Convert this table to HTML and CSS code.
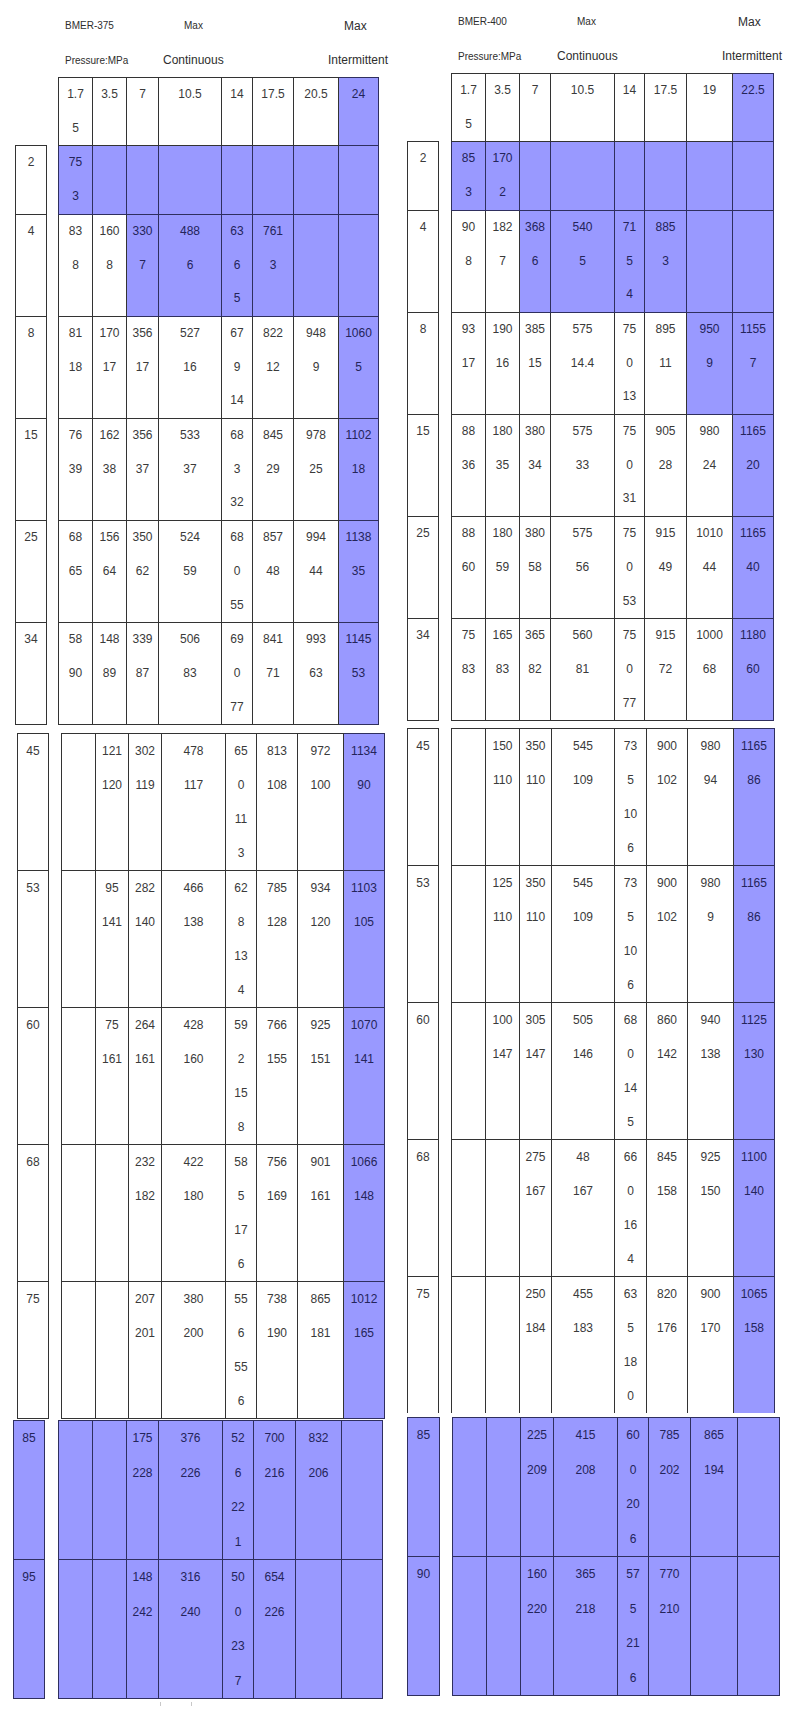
FILE: index.html
```html
<!DOCTYPE html>
<html lang="en">
<head>
<meta charset="utf-8">
<title>BMER-375 / BMER-400 Pressure Table</title>
<link rel="stylesheet" href="styles.css">
</head>
<body>
<div class="page">
  <div class="panel left">
    <div class="head">
      <div class="hline">
        <span class="t10 hw-a">BMER-375</span>
        <span class="t10 hw-b">Max</span>
        <span class="t12">Max</span>
      </div>
      <div class="hline hline2">
        <span class="t10 hw-c">Pressure:MPa</span>
        <span class="t12 hw-d">Continuous</span>
        <span class="t12">Intermittent</span>
      </div>
    </div>

    <table class="seg s1 L1">
      <colgroup><col class="w31"><col class="w12"><col class="w34"><col class="w34"><col class="w32"><col class="w63"><col class="w31"><col class="w41"><col class="w45"><col class="w40"></colgroup>
      <tr><td class="blank"></td><td class="sp"></td><td>1.7<br>5</td><td>3.5</td><td>7</td><td>10.5</td><td>14</td><td>17.5</td><td>20.5</td><td class="b">24</td></tr>
      <tr><td>2</td><td class="sp"></td><td class="b">75<br>3</td><td class="b"></td><td class="b"></td><td class="b"></td><td class="b"></td><td class="b"></td><td class="b"></td><td class="b"></td></tr>
      <tr><td>4</td><td class="sp"></td><td>83<br>8</td><td>160<br>8</td><td class="b">330<br>7</td><td class="b">488<br>6</td><td class="b">63<br>6<br>5</td><td class="b">761<br>3</td><td class="b"></td><td class="b"></td></tr>
      <tr><td>8</td><td class="sp"></td><td>81<br>18</td><td>170<br>17</td><td>356<br>17</td><td>527<br>16</td><td>67<br>9<br>14</td><td>822<br>12</td><td>948<br>9</td><td class="b">1060<br>5</td></tr>
      <tr><td>15</td><td class="sp"></td><td>76<br>39</td><td>162<br>38</td><td>356<br>37</td><td>533<br>37</td><td>68<br>3<br>32</td><td>845<br>29</td><td>978<br>25</td><td class="b">1102<br>18</td></tr>
      <tr><td>25</td><td class="sp"></td><td>68<br>65</td><td>156<br>64</td><td>350<br>62</td><td>524<br>59</td><td>68<br>0<br>55</td><td>857<br>48</td><td>994<br>44</td><td class="b">1138<br>35</td></tr>
      <tr><td>34</td><td class="sp"></td><td>58<br>90</td><td>148<br>89</td><td>339<br>87</td><td>506<br>83</td><td>69<br>0<br>77</td><td>841<br>71</td><td>993<br>63</td><td class="b">1145<br>53</td></tr>
    </table>

    <table class="seg s2 L2">
      <colgroup><col class="w31"><col class="w13"><col class="w34"><col class="w33"><col class="w33"><col class="w64"><col class="w31"><col class="w41"><col class="w46"><col class="w41"></colgroup>
      <tr><td>45</td><td class="sp"></td><td></td><td>121<br>120</td><td>302<br>119</td><td>478<br>117</td><td>65<br>0<br>11<br>3</td><td>813<br>108</td><td>972<br>100</td><td class="b">1134<br>90</td></tr>
      <tr><td>53</td><td class="sp"></td><td></td><td>95<br>141</td><td>282<br>140</td><td>466<br>138</td><td>62<br>8<br>13<br>4</td><td>785<br>128</td><td>934<br>120</td><td class="b">1103<br>105</td></tr>
      <tr><td>60</td><td class="sp"></td><td></td><td>75<br>161</td><td>264<br>161</td><td>428<br>160</td><td>59<br>2<br>15<br>8</td><td>766<br>155</td><td>925<br>151</td><td class="b">1070<br>141</td></tr>
      <tr><td>68</td><td class="sp"></td><td></td><td></td><td>232<br>182</td><td>422<br>180</td><td>58<br>5<br>17<br>6</td><td>756<br>169</td><td>901<br>161</td><td class="b">1066<br>148</td></tr>
      <tr><td>75</td><td class="sp"></td><td></td><td></td><td>207<br>201</td><td>380<br>200</td><td>55<br>6<br>55<br>6</td><td>738<br>190</td><td>865<br>181</td><td class="b">1012<br>165</td></tr>
    </table>

    <table class="seg s3 L3">
      <colgroup><col class="w31"><col class="w14"><col class="w34"><col class="w34"><col class="w32"><col class="w64"><col class="w31"><col class="w42"><col class="w46"><col class="w41"></colgroup>
      <tr><td class="b">85</td><td class="sp"></td><td class="b"></td><td class="b"></td><td class="b">175<br>228</td><td class="b">376<br>226</td><td class="b">52<br>6<br>22<br>1</td><td class="b">700<br>216</td><td class="b">832<br>206</td><td class="b"></td></tr>
      <tr><td class="b">95</td><td class="sp"></td><td class="b"></td><td class="b"></td><td class="b">148<br>242</td><td class="b">316<br>240</td><td class="b">50<br>0<br>23<br>7</td><td class="b">654<br>226</td><td class="b"></td><td class="b"></td></tr>
    </table>
    <div class="mark"></div>
  </div>

  <div class="panel right">
    <div class="head">
      <div class="hline">
        <span class="t10 hw-a">BMER-400</span>
        <span class="t10 hw-b2">Max</span>
        <span class="t12">Max</span>
      </div>
      <div class="hline hline2">
        <span class="t10 hw-c2">Pressure:MPa</span>
        <span class="t12 hw-d">Continuous</span>
        <span class="t12">Intermittent</span>
      </div>
    </div>

    <table class="seg s1 R1">
      <colgroup><col class="w31"><col class="w13"><col class="w34"><col class="w34"><col class="w31"><col class="w64"><col class="w30"><col class="w42"><col class="w46"><col class="w41"></colgroup>
      <tr><td class="blank"></td><td class="sp"></td><td>1.7<br>5</td><td>3.5</td><td>7</td><td>10.5</td><td>14</td><td>17.5</td><td>19</td><td class="b">22.5</td></tr>
      <tr><td>2</td><td class="sp"></td><td class="b">85<br>3</td><td class="b">170<br>2</td><td class="b"></td><td class="b"></td><td class="b"></td><td class="b"></td><td class="b"></td><td class="b"></td></tr>
      <tr><td>4</td><td class="sp"></td><td>90<br>8</td><td>182<br>7</td><td class="b">368<br>6</td><td class="b">540<br>5</td><td class="b">71<br>5<br>4</td><td class="b">885<br>3</td><td class="b"></td><td class="b"></td></tr>
      <tr><td>8</td><td class="sp"></td><td>93<br>17</td><td>190<br>16</td><td>385<br>15</td><td>575<br>14.4</td><td>75<br>0<br>13</td><td>895<br>11</td><td class="b">950<br>9</td><td class="b">1155<br>7</td></tr>
      <tr><td>15</td><td class="sp"></td><td>88<br>36</td><td>180<br>35</td><td>380<br>34</td><td>575<br>33</td><td>75<br>0<br>31</td><td>905<br>28</td><td>980<br>24</td><td class="b">1165<br>20</td></tr>
      <tr><td>25</td><td class="sp"></td><td>88<br>60</td><td>180<br>59</td><td>380<br>58</td><td>575<br>56</td><td>75<br>0<br>53</td><td>915<br>49</td><td>1010<br>44</td><td class="b">1165<br>40</td></tr>
      <tr><td>34</td><td class="sp"></td><td>75<br>83</td><td>165<br>83</td><td>365<br>82</td><td>560<br>81</td><td>75<br>0<br>77</td><td>915<br>72</td><td>1000<br>68</td><td class="b">1180<br>60</td></tr>
    </table>

    <table class="seg s2 R2 open">
      <colgroup><col class="w31"><col class="w13"><col class="w34"><col class="w34"><col class="w32"><col class="w63"><col class="w32"><col class="w41"><col class="w46"><col class="w41"></colgroup>
      <tr><td>45</td><td class="sp"></td><td></td><td>150<br>110</td><td>350<br>110</td><td>545<br>109</td><td>73<br>5<br>10<br>6</td><td>900<br>102</td><td>980<br>94</td><td class="b">1165<br>86</td></tr>
      <tr><td>53</td><td class="sp"></td><td></td><td>125<br>110</td><td>350<br>110</td><td>545<br>109</td><td>73<br>5<br>10<br>6</td><td>900<br>102</td><td>980<br>9</td><td class="b">1165<br>86</td></tr>
      <tr><td>60</td><td class="sp"></td><td></td><td>100<br>147</td><td>305<br>147</td><td>505<br>146</td><td>68<br>0<br>14<br>5</td><td>860<br>142</td><td>940<br>138</td><td class="b">1125<br>130</td></tr>
      <tr><td>68</td><td class="sp"></td><td></td><td></td><td>275<br>167</td><td>48<br>167</td><td>66<br>0<br>16<br>4</td><td>845<br>158</td><td>925<br>150</td><td class="b">1100<br>140</td></tr>
      <tr><td>75</td><td class="sp"></td><td></td><td></td><td>250<br>184</td><td>455<br>183</td><td>63<br>5<br>18<br>0</td><td>820<br>176</td><td>900<br>170</td><td class="b">1065<br>158</td></tr>
    </table>

    <table class="seg s3 R3">
      <colgroup><col class="w32"><col class="w13"><col class="w34"><col class="w34"><col class="w33"><col class="w64"><col class="w31"><col class="w42"><col class="w47"><col class="w42"></colgroup>
      <tr><td class="b">85</td><td class="sp"></td><td class="b"></td><td class="b"></td><td class="b">225<br>209</td><td class="b">415<br>208</td><td class="b">60<br>0<br>20<br>6</td><td class="b">785<br>202</td><td class="b">865<br>194</td><td class="b"></td></tr>
      <tr><td class="b">90</td><td class="sp"></td><td class="b"></td><td class="b"></td><td class="b">160<br>220</td><td class="b">365<br>218</td><td class="b">57<br>5<br>21<br>6</td><td class="b">770<br>210</td><td class="b"></td><td class="b"></td></tr>
    </table>
  </div>
</div>
</body>
</html>
```

FILE: styles.css
```css
html, body {
  margin: 0;
  padding: 0;
  background: #ffffff;
}

body {
  font-family: "Liberation Sans", Arial, sans-serif;
  color: #3c3c3c;
}

.page {
  display: flex;
  width: 800px;
}

.panel {
  width: 400px;
  display: flex;
  flex-direction: column;
  align-items: flex-start;
}

/* header labels above each table */
.head {
  display: flex;
  flex-direction: column;
  padding-top: 8px;
  padding-left: 65px;
}

.right .head {
  padding-top: 4px;
  padding-left: 58px;
}

.hline {
  display: flex;
  align-items: center;
  height: 35px;
  white-space: nowrap;
  color: #2e2e2e;
}

.hline2 {
  height: 34px;
}

.t10 { font-size: 10px; }
.t12 { font-size: 12px; }

.hw-a  { width: 119px; }
.hw-b  { width: 160px; }
.hw-b2 { width: 161px; }
.hw-c  { width: 98px; }
.hw-c2 { width: 99px; }
.hw-d  { width: 165px; }

/* segmented tables */
.seg {
  border-collapse: collapse;
  table-layout: fixed;
}

.seg td {
  border: 1px solid #333333;
  padding: 0;
  text-align: center;
  vertical-align: top;
  font-size: 12px;
  line-height: 34px;
  white-space: nowrap;
  color: #3a3a3a;
}

.s1 td { line-height: 33.7px; }
.s3 td { line-height: 34.5px; }

.seg td.sp,
.seg td.blank {
  border: none;
  background: transparent;
}

.seg td.b {
  background: #9999ff;
  color: #24245a;
  border-color: #2f2f5e;
}

.open tr:last-child td { border-bottom: none; }

/* segment placement */
.L1 { width: 363px; margin-left: 15px; }
.L2 { width: 367px; margin-left: 17px; margin-top: 8px; }
.L3 { width: 369px; margin-left: 13px; margin-top: 1px; }

.R1 { width: 366px; margin-left: 7px; }
.R2 { width: 367px; margin-left: 7px; margin-top: 7px; }
.R3 { width: 372px; margin-left: 7px; margin-top: 4px; }

/* column widths */
.w12 { width: 12px; }
.w13 { width: 13px; }
.w14 { width: 14px; }
.w30 { width: 30px; }
.w31 { width: 31px; }
.w32 { width: 32px; }
.w33 { width: 33px; }
.w34 { width: 34px; }
.w40 { width: 40px; }
.w41 { width: 41px; }
.w42 { width: 42px; }
.w45 { width: 45px; }
.w46 { width: 46px; }
.w47 { width: 47px; }
.w63 { width: 63px; }
.w64 { width: 64px; }

/* small scan mark under the left table */
.mark {
  width: 30px;
  height: 4px;
  margin-top: 3px;
  margin-left: 160px;
  border-left: 1px solid #c8c8c8;
  border-right: 1px solid #c8c8c8;
}
```
